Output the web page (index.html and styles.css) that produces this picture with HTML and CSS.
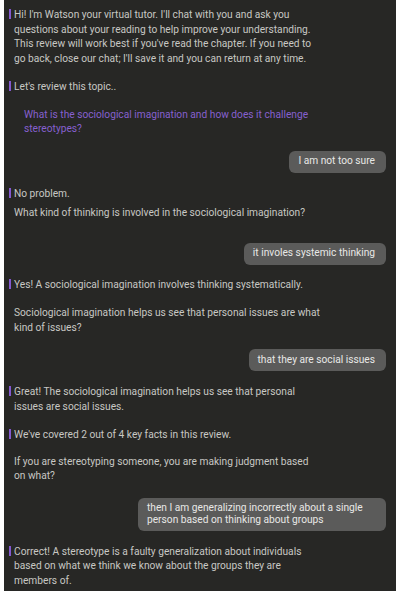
FILE: index.html
```html
<!DOCTYPE html>
<html lang="en">

<head>
    <meta charset="UTF-8">
    <meta name="viewport" content="width=device-width, initial-scale=1.0">
    <title>Watson Tutor</title>
    <link rel="stylesheet" href="styles.css">
</head>

<body>
    <div class="chat">
        <p class="bot first">Hi! I'm Watson your virtual tutor. I'll chat with you and ask you questions about your reading to help improve your understanding. This review will work best if you've read the chapter. If you need to go back, close our chat; I'll save it and you can return at any time.</p>
        <p class="bot first">Let's review this topic..</p>
        <p class="topic">What is the sociological imagination and how does it challenge stereotypes?</p>

        <div class="user"><span class="bubble">I am not too sure</span></div>

        <p class="bot first">No problem.</p>
        <p class="bot tight">What kind of thinking is involved in the sociological imagination?</p>

        <div class="user wide"><span class="bubble">it involes systemic thinking</span></div>

        <p class="bot first up">Yes! A sociological imagination involves thinking systematically.</p>
        <p class="bot">Sociological imagination helps us see that personal issues are what kind of issues?</p>

        <div class="user"><span class="bubble">that they are social issues</span></div>

        <p class="bot first">Great! The sociological imagination helps us see that personal issues are social issues.</p>
        <p class="bot first">We've covered 2 out of 4 key facts in this review.</p>
        <p class="bot up2">If you are stereotyping someone, you are making judgment based on what?</p>

        <div class="user"><span class="bubble">then I am generalizing incorrectly about a single person based on thinking about groups</span></div>

        <p class="bot first">Correct! A stereotype is a faulty generalization about individuals based on what we think we know about the groups they are members of.</p>
    </div>
</body>

</html>
```

FILE: styles.css
```css
* {
    margin: 0;
    padding: 0;
    box-sizing: border-box;
}

html,
body {
    height: 100%;
    background-color: #ffffff;
}

body {
    font-family: Roboto, "Liberation Sans", sans-serif;
    font-size: 10.2px;
    line-height: 14.5px;
}

.chat {
    margin: 0 5px 0 4px;
    min-height: 100%;
    background-color: #272725;
    padding: 8px 10px 10px 0;
    display: flex;
    flex-direction: column;
    gap: 14px;
}

/* 机器人消息 */
.bot {
    color: #c8c8c4;
    padding-left: 10px;
    max-width: 317px;
}

/* 段落首行前的紫色竖线 */
.bot.first {
    text-indent: -5px;
}

.bot.first::before {
    content: "";
    display: inline-block;
    width: 2px;
    height: 10px;
    margin-right: 3px;
    vertical-align: -1px;
    background-color: #8459cf;
}

.bot.tight {
    margin-top: -9px;
}

.bot.up {
    margin-top: -1px;
}

.bot.up2 {
    margin-top: -2px;
}

.topic {
    color: #8660cf;
    padding-left: 20px;
    max-width: 315px;
    margin-top: -1px;
}

/* 用户回复 */
.user {
    display: flex;
    justify-content: flex-end;
    padding-left: 134px;
}

.user.wide {
    margin-top: 8px;
}

.bubble {
    background-color: #5b5b5a;
    color: #e8e8e6;
    border-radius: 6px;
    padding: 4px 11px 4px 9px;
    line-height: 12.5px;
    min-height: 22px;
    display: flex;
    align-items: center;
}
```
